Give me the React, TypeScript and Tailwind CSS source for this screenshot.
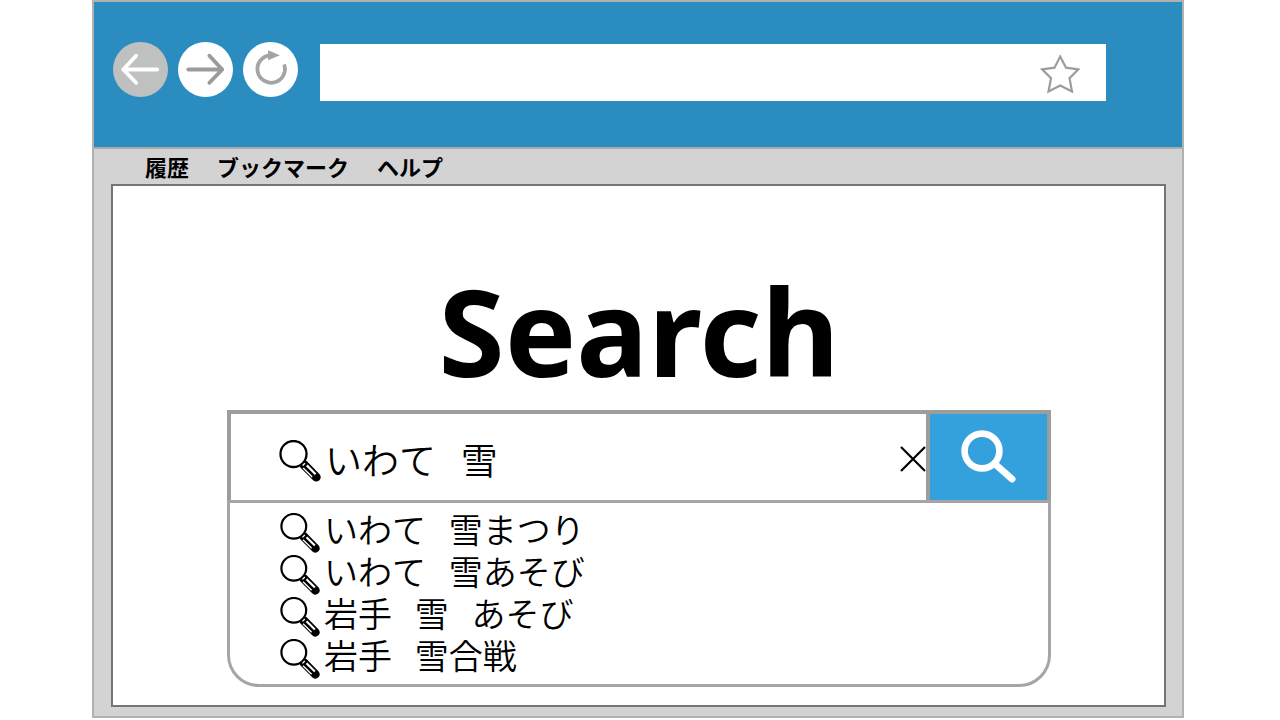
import { useState } from "react";

const suggestions = [
  "いわて   雪まつり",
  "いわて   雪あそび",
  "岩手   雪   あそび",
  "岩手   雪合戦",
];

const menuItems = ["履歴", "ブックマーク", "ヘルプ"];

function Magnifier({ className }: { className: string }) {
  return (
    <svg viewBox="0 0 42 42" fill="none" className={className} aria-hidden="true">
      <circle cx="14.5" cy="14" r="13" stroke="black" strokeWidth="2.3" />
      <path d="M27.5 20.8 40.6 34.2Q43 37.5 40.4 40.2Q37.6 42.8 34.4 40.6L21 27.3Q20.8 24.5 23 23.2Q25 20.8 27.5 20.8Z" fill="black" />
      <path d="M24.2 28 33.2 37" stroke="white" strokeWidth="1.4" />
      <path d="M27.8 25.4 36.6 34.2" stroke="white" strokeWidth="2.2" />
      <path d="M23.6 25.6 26 23.2" stroke="white" strokeWidth="1.4" />
    </svg>
  );
}

function BrowserHeader() {
  return (
    <header className="flex items-start border-b-2 border-[#aaacac] bg-[#2b8cbf] pt-10 pr-[76px] pb-[46px] pl-[19px]">
      <nav className="flex gap-[10px]" aria-label="ナビゲーション">
        <button type="button" aria-label="戻る" className="size-[55px] shrink-0 rounded-full bg-[#bfc0c0]">
          <svg viewBox="0 0 56 56" fill="none" stroke="white" strokeWidth="4" strokeLinecap="round" strokeLinejoin="round">
            <path d="M45 28H10.5M23.5 14 10.5 28l13 13.5" />
          </svg>
        </button>
        <button type="button" aria-label="進む" className="size-[55px] shrink-0 rounded-full bg-white">
          <svg viewBox="0 0 56 56" fill="none" stroke="#9a9b9b" strokeWidth="4" strokeLinecap="round" strokeLinejoin="round">
            <path d="M10.5 28H45M32 14l13 14-13 13.5" />
          </svg>
        </button>
        <button type="button" aria-label="再読み込み" className="size-[55px] shrink-0 rounded-full bg-white">
          <svg viewBox="0 0 56 56" fill="none">
            <path d="M41.9 22.8A14 14 0 1 1 27 13.6" stroke="#a3a4a4" strokeWidth="3.8" />
            <path d="M25.5 8.5 37.5 13.6 25.5 18.6Z" fill="#a3a4a4" />
          </svg>
        </button>
      </nav>
      <div className="mt-0.5 ml-[22px] flex h-[57px] min-w-0 flex-1 items-center bg-white pr-[26px]">
        <input type="text" aria-label="アドレス" className="h-full min-w-0 flex-1 px-4 text-xl outline-none" />
        <button type="button" aria-label="ブックマークに追加" className="mt-0.5 size-10 shrink-0">
          <svg viewBox="0 0 40 40" fill="none" stroke="#9b9d9d" strokeWidth="2.2">
            <path d="M20.2 2.6 26 13.7 38.4 15.3 29.5 24.2 32 37.5 20.2 31.5 8.5 37.5 11 24.2 2.1 15.3 14.5 13.7Z" />
          </svg>
        </button>
      </div>
    </header>
  );
}

export default function App() {
  const [query, setQuery] = useState("いわて   雪");

  return (
    <div className="bg-white pr-24 pb-[2px] pl-[92px] font-['Noto_Sans_CJK_JP',sans-serif] text-black">
      <div className="border-2 border-[#b0b1b1] bg-[#d3d3d3]">
        <BrowserHeader />
        <nav className="flex h-[35px] items-center gap-7 pb-0.5 pl-[51px] text-[22px] leading-7 font-bold" aria-label="メニュー">
          {menuItems.map((item) => (
            <a key={item} href="#" className="whitespace-nowrap">
              {item}
            </a>
          ))}
        </nav>
        <main className="mr-4 mb-[9px] ml-[17px] border-2 border-[#747575] bg-white pt-[75px] pr-[113px] pb-[18px] pl-[114px]">
          <h1 className="mb-[9px] text-center font-['Noto_Sans',sans-serif] text-[120px] leading-[140px] font-bold">
            Search
          </h1>
          <form role="search" onSubmit={(event) => event.preventDefault()}>
            <div className="flex h-[90px] border-4 border-b-0 border-[#9c9e9e]">
              <div className="flex min-w-0 flex-1 items-center pt-1 pl-12">
                <label htmlFor="query" aria-label="検索" className="pt-1">
                  <Magnifier className="size-[42px]" />
                </label>
                <input
                  id="query"
                  type="text"
                  value={query}
                  onChange={(event) => setQuery(event.target.value)}
                  className="ml-1 h-14 min-w-0 flex-1 text-[37px] font-[350] outline-none"
                />
                <button type="button" aria-label="消去" onClick={() => setQuery("")} className="shrink-0">
                  <svg viewBox="0 0 26 26" className="size-[26px]" stroke="black" strokeWidth="2.2">
                    <path d="M1 1 25 25M25 1 1 25" />
                  </svg>
                </button>
              </div>
              <button
                type="submit"
                aria-label="検索する"
                className="flex w-[121px] shrink-0 items-center justify-center border-l-4 border-[#9c9e9e] bg-[#34a0dc]"
              >
                <svg viewBox="0 0 58 58" fill="none" className="size-[58px]" stroke="white">
                  <circle cx="22" cy="23" r="17.4" strokeWidth="6.6" />
                  <path d="M35 36 52 51" strokeWidth="7" strokeLinecap="round" />
                </svg>
              </button>
            </div>
            <ul className="rounded-b-[32px] border-3 border-[#a5a5a5] pt-[10px] pb-[3px] pl-[50px]">
              {suggestions.map((text) => (
                <li key={text}>
                  <button
                    type="button"
                    onClick={() => setQuery(text)}
                    className="flex h-[42px] items-start gap-1 text-[34px] leading-8 font-[350] whitespace-pre"
                  >
                    <Magnifier className="size-10" />
                    {text}
                  </button>
                </li>
              ))}
            </ul>
          </form>
        </main>
      </div>
    </div>
  );
}
